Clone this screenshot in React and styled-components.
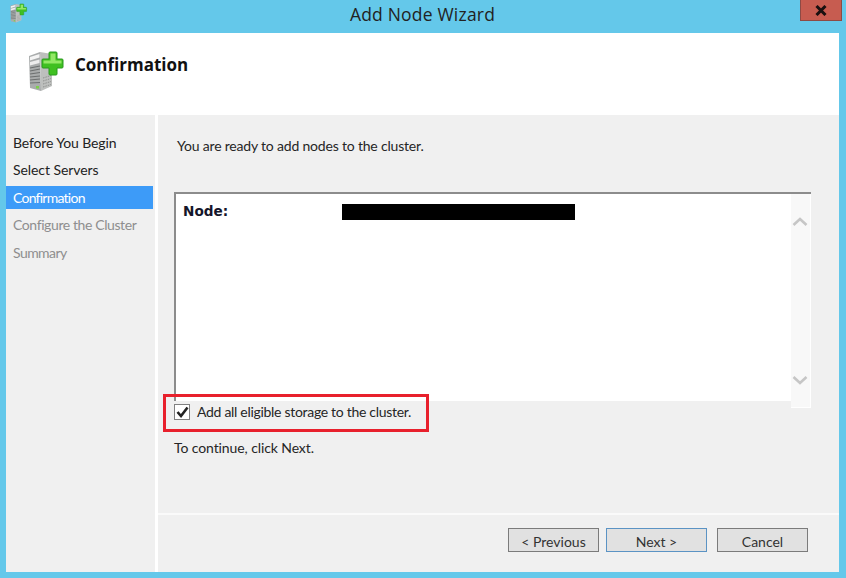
import React from "react";
import styled, { createGlobalStyle } from "styled-components";

const Global = createGlobalStyle`
  html, body { margin: 0; padding: 0; background: #64c8ea; }
  #root { width: 846px; height: 578px; overflow: hidden; }
  * { box-sizing: border-box; }
`;
const FONT = `"Open Sans", "Noto Sans", "Liberation Sans", sans-serif`;
const TEXT = `Lato, "Open Sans", "Liberation Sans", sans-serif`;

const Window = styled.div`
  width: 846px; height: 578px; background: #64c8ea; display: flex; flex-direction: column;
  padding: 0 7px 6px 6px; font-family: ${FONT}; color: #1c1c1c;
`;
const TitleBar = styled.div`
  height: 33px; flex: none; display: grid; grid-template-columns: 1fr auto 1fr;
`;
const TitleIcon = styled.div` padding: 2px 0 0 2px; `;
const TitleText = styled.div`
  font-size: 17.5px; line-height: 28px; color: #222; letter-spacing: 0.2px;
`;
const CloseWrap = styled.div` display: flex; justify-content: flex-end; `;
const CloseButton = styled.div`
  width: 42px; height: 21px; margin-right: -3px; background: #c75c50; border: 1px solid #8e4a44; border-top: 0;
  display: flex; align-items: center; justify-content: center;
`;
const Content = styled.div` flex: 1; display: flex; flex-direction: column; background: #fff; min-height: 0; `;
const Header = styled.div`
  height: 82px; flex: none; background: #fff; display: flex; align-items: flex-start; padding: 15px 0 0 18px; gap: 7px;
`;
const HeaderTitle = styled.div`
  font-size: 17px; font-weight: 700; color: #111; line-height: 22px; margin-top: 6px;
`;
const Body = styled.div` flex: 1; display: flex; min-height: 0; gap: 3px; `;
const Sidebar = styled.div` width: 149px; flex: none; background: #f0f0f0; padding-top: 16px; `;
const Step = styled.div`
  height: 23px; margin-bottom: 4.4px; line-height: 24px; padding-left: 7px; font-family: ${TEXT}; font-size: 14px;
  letter-spacing: ${p => p.$track}px;
  color: ${p => (p.$state === "done" ? "#222" : p.$state === "todo" ? "#8e8e8e" : "#fff")};
  background: ${p => (p.$state === "active" ? "#3d9bf8" : "transparent")};
  width: 147px;
`;
const Main = styled.div` flex: 1; background: #f0f0f0; display: flex; flex-direction: column; position: relative; min-width: 0; `;
const Page = styled.div`
  flex: 1; padding: 21px 28px 0 16px; display: flex; flex-direction: column; min-height: 0;
  font-family: ${TEXT}; font-size: 14px; color: #262626;
`;
const Intro = styled.div` line-height: 20px; padding-left: 3px; letter-spacing: -0.19px; `;
const ListBox = styled.div`
  margin-top: 36px; height: 216px; display: flex;
  border-top: 2px solid #8c8c8c; position: relative;
`;
const ListArea = styled.div`
  flex: 1; height: 207px; background: #fff; border-left: 2px solid #8c8c8c; display: flex; align-items: flex-start; padding: 10px 0 0 7px;
`;
const NodeLabel = styled.div`
  width: 159px; font-family: "DejaVu Sans", Verdana, sans-serif; font-weight: 700; font-size: 13.6px; line-height: 15px; color: #15152a;
`;
const Redacted = styled.div` width: 233px; height: 16px; background: #000; `;
const Scrollbar = styled.div`
  width: 20px; flex: none; background: #f8f8f8; border-right: 1px solid #fff; border-bottom: 1px solid #fff; display: flex; flex-direction: column;
  justify-content: space-between; align-items: center; padding: 23px 2px 22px 0;
`;
const CheckRow = styled.label`
  display: flex; align-items: center; gap: 7px; height: 24px; margin-top: -9px; position: relative; letter-spacing: -0.3px;
`;
const CheckBox = styled.span`
  width: 16px; height: 16px; flex: none; margin-top: 2px; background: #fff; border: 1px solid #808080; display: flex; align-items: center; justify-content: center;
`;
const Continue = styled.div` line-height: 20px; margin-top: 15px; letter-spacing: -0.1px; `;
const Highlight = styled.div`
  position: absolute; left: 5px; top: 279px; width: 266px; height: 38px; border: 3px solid #e8202c; pointer-events: none;
`;
const Footer = styled.div`
  height: 59px; flex: none; border-top: 2px solid #fafafa; display: flex; justify-content: flex-end; padding: 13px 31px 0 0;
`;
const Button = styled.div`
  width: ${p => p.$w || 91}px; height: 24px; background: #e1e1e1; border: 1px solid ${p => (p.$primary ? "#5b93c4" : "#7b7b7b")};
  margin-right: ${p => p.$gap || 0}px; font-family: ${TEXT}; font-size: 14px; line-height: 25px; text-align: center; color: #333;
`;

const ServerIcon = ({ width, height }) => (
  <svg width={width} height={height} viewBox="0 0 44 48">
    <path d="M5 8 L16 4 L17 43 L6 40 Z" fill="#a9acac" />
    <path d="M16 4 L28 6 L28 38 L17 43 Z" fill="#bdbfbd" />
    <path d="M6 9 L15.500 6 V9.500 L6 12.500 Z" fill="#f4f4f4" />
    <path d="M6 14 L15.500 11.500 V15 L6 17.500 Z" fill="#ededed" />
    <path d="M6 20 L16 18 M6 23 L16 21 M6 26 L16 24.500 M6 29 L16 28 M6 32 L16 31 M6 35 L16 34.500" stroke="#6d7070" strokeWidth="1.200" fill="none" />
    <path d="M19 30 L27 27.500 M19 33 L27 30.500 M19 36 L27 33.500 M19 39 L27 36.500" stroke="#8f918f" strokeWidth="1" strokeDasharray="1.500 1" fill="none" />
    <rect x="12" y="38" width="3" height="2.500" fill="#7bd04a" />
    <path d="M25 11 V5 Q25 4 26 4 H32 Q33 4 33 5 V11 H38 Q39 11 39 12 V19 Q39 20 38 20 H33 V26 Q33 27 32 27 H26 Q25 27 25 26 V20 H19 Q18 20 18 19 V12 Q18 11 19 11 Z" fill="#3fc021" stroke="#2b9a1e" strokeWidth="1" />
    <path d="M26.500 12.500 V5.500 H31.500 V12.500 H37.500 V15.500 H19.500 V12.500 Z" fill="#93e866" />
  </svg>
);

const Chevron = ({ down }) => (
  <svg width="16" height="10" viewBox="0 0 16 10">
    <path d={down ? "M1.500 2 L8 8 L14.500 2" : "M1.500 8 L8 2 L14.500 8"} fill="none" stroke="#c6c6c6" strokeWidth="2.600" />
  </svg>
);

export default function App() {
  return (
    <Window>
      <Global />
      <TitleBar>
        <TitleIcon><ServerIcon width={21} height={23} /></TitleIcon>
        <TitleText>Add Node Wizard</TitleText>
        <CloseWrap>
          <CloseButton>
            <svg width="14" height="11" viewBox="0 0 14 11">
              <path d="M2.500 1 L11.500 10 M11.500 1 L2.500 10" stroke="#1a1010" strokeWidth="3" fill="none" />
            </svg>
          </CloseButton>
        </CloseWrap>
      </TitleBar>
      <Content>
        <Header>
          <ServerIcon width={44} height={48} />
          <HeaderTitle>Confirmation</HeaderTitle>
        </Header>
        <Body>
          <Sidebar>
            <Step $state="done" $track={-0.13}>Before You Begin</Step>
            <Step $state="done" $track={-0.07}>Select Servers</Step>
            <Step $state="active" $track={-0.75}>Confirmation</Step>
            <Step $state="todo" $track={-0.4}>Configure the Cluster</Step>
            <Step $state="todo" $track={-0.55}>Summary</Step>
          </Sidebar>
          <Main>
            <Page>
              <Intro>You are ready to add nodes to the cluster.</Intro>
              <ListBox>
                <ListArea>
                  <NodeLabel>Node:</NodeLabel>
                  <Redacted />
                </ListArea>
                <Scrollbar>
                  <Chevron />
                  <Chevron down />
                </Scrollbar>
              </ListBox>
              <CheckRow>
                <CheckBox>
                  <svg width="13" height="12" viewBox="0 0 13 12">
                    <path d="M1.500 6 L5 10 L11.500 1.500" fill="none" stroke="#222" strokeWidth="2.600" />
                  </svg>
                </CheckBox>
                Add all eligible storage to the cluster.
              </CheckRow>
              <Continue>To continue, click Next.</Continue>
            </Page>
            <Footer>
              <Button $gap={7}>&lt; Previous</Button>
              <Button $primary $w={101} $gap={10}>Next &gt;</Button>
              <Button>Cancel</Button>
            </Footer>
            <Highlight />
          </Main>
        </Body>
      </Content>
    </Window>
  );
}
